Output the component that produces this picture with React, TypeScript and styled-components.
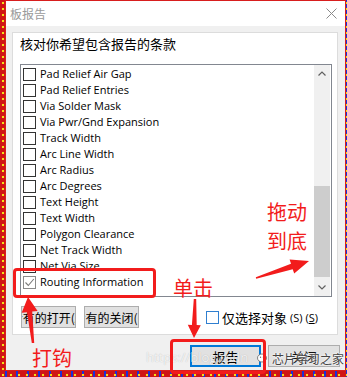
import React from "react";
import styled, { createGlobalStyle } from "styled-components";

const CJK = `"Noto Sans CJK SC", "Noto Sans", sans-serif`;
const UI = `"Open Sans", "Noto Sans CJK SC", sans-serif`;
const RED = "#f21c1c";

const GlobalStyle = createGlobalStyle`
  html, body { margin: 0; padding: 0; }
  body { width: 347px; height: 377px; overflow: hidden; font-family: ${UI}; }
  * { box-sizing: border-box; }
`;

const Screen = styled.div`
  position: relative;
  width: 347px;
  height: 377px;
  padding: 0 1px 6px 5px;
  background:
    radial-gradient(circle at 3px 3px, #f2e21a 1px, transparent 1.6px) 0 0 / 8px 6px,
    repeating-linear-gradient(90deg, transparent 0 5px, #1c2fd6 5px 7px, transparent 7px 11px),
    #cf1515;
`;

const Window = styled.div`
  height: 100%;
  display: flex;
  flex-direction: column;
  border: 1px solid #d81e1e;
  background: #f0f0f0;
`;

const TitleBar = styled.div`
  height: 25px;
  flex: none;
  background: #fff;
  display: flex;
  align-items: center;
  justify-content: space-between;
  padding: 0 8px 0 4px;
`;

const Title = styled.span`
  font: 12px ${CJK};
  color: #9a9a9a;
`;

const Body = styled.div`
  flex: 1;
  display: flex;
  flex-direction: column;
  padding: 6px 5px 3px 6px;
`;

const Panel = styled.div`
  margin-right: 2px;
  background: #fff;
  border: 1px solid #dcdcdc;
  padding: 2px 5px 6px 7px;
  display: flex;
  flex-direction: column;
`;

const Heading = styled.div`
  height: 18px;
  font: 13px/18px ${CJK};
  color: #000;
  margin-bottom: 11px;
`;

const ListBox = styled.div`
  height: 233px;
  border: 1px solid #828790;
  display: flex;
  background: #fff;
`;

const Items = styled.div`
  flex: 1;
  padding-top: 1px;
  overflow: hidden;
`;

const Row = styled.div`
  height: 16px;
  display: flex;
  align-items: center;
  gap: 4px;
  padding-left: 2px;
  font: 11px/16px ${UI};
  color: #000;
  white-space: nowrap;
`;

const Box = styled.span<{ $checked?: boolean }>`
  width: 13px;
  height: 13px;
  flex: none;
  display: grid;
  place-items: center;
  background: #fff;
  border: 1px solid ${(p) => (p.$checked ? "#8a8a8a" : "#333")};
`;

const Scrollbar = styled.div`
  width: 16px;
  margin-right: 1px;
  background: #f0f0f0;
  display: flex;
  flex-direction: column;
`;

const ScrollArrow = styled.div`
  height: 17px;
  display: grid;
  place-items: center;
`;

const Track = styled.div`
  flex: 1;
  padding-top: 104px;
`;

const Thumb = styled.div`
  height: 91px;
  background: #cdcdcd;
`;

const Controls = styled.div`
  margin-top: 9px;
  height: 22px;
  display: flex;
  align-items: center;
  gap: 8px;
  padding-left: 1px;
`;

const SmallButton = styled.button`
  width: 55px;
  height: 22px;
  padding: 0;
  background: #e1e1e1;
  border: 1px solid #adadad;
  font: 12px ${CJK};
  color: #000;
  overflow: hidden;
  white-space: nowrap;
  display: flex;
  align-items: center;
  justify-content: center;
`;

const CheckLabel = styled.label`
  margin-left: 59px;
  display: flex;
  align-items: center;
  gap: 2px;
  font: 13px ${CJK};
  color: #000;
  white-space: nowrap;
`;

const BlueBox = styled.span`
  width: 13px;
  height: 13px;
  border: 1px solid #2f7fd0;
  background: #fff;
  margin-right: 1px;
`;

const Hint = styled.span`
  font: 11px ${UI};
  margin-left: 1px;
`;

const Footer = styled.div`
  margin-top: 10px;
  display: flex;
  justify-content: flex-end;
  gap: 7px;
`;

const DialogButton = styled.button<{ $primary?: boolean; $w: number }>`
  width: ${(p) => p.$w}px;
  height: 22px;
  padding: 0;
  background: #e1e1e1;
  border: ${(p) => (p.$primary ? "2px solid #0078d7" : "1px solid #adadad")};
  font: 13px ${CJK};
  color: #000;
  display: flex;
  align-items: center;
  justify-content: center;
`;

/* ---------- overlays (annotations drawn over the screenshot) ---------- */

const Overlay = styled.div`
  position: absolute;
  inset: 0;
  pointer-events: none;
`;

const RedFrame = styled.div<{ $x: number; $y: number; $w: number; $h: number }>`
  position: absolute;
  left: ${(p) => p.$x}px;
  top: ${(p) => p.$y}px;
  width: ${(p) => p.$w}px;
  height: ${(p) => p.$h}px;
  border: 3px solid ${RED};
  border-radius: 4px;
`;

const Mark = styled.div<{ $x: number; $y: number }>`
  position: absolute;
  left: ${(p) => p.$x}px;
  top: ${(p) => p.$y}px;
  font: 20px/29px ${CJK};
  color: ${RED};
  white-space: nowrap;
`;

const Watermark = styled.div`
  position: absolute;
  left: 146px;
  top: 348px;
  font: 13px ${UI};
  color: rgba(255, 255, 255, 0.8);
  text-shadow: 0 0 1px rgba(0, 0, 0, 0.25);
  white-space: nowrap;
`;

const Brand = styled.div`
  position: absolute;
  left: 257px;
  top: 350px;
  display: flex;
  align-items: center;
  gap: 3px;
  font: 12px ${CJK};
  color: #444;
  text-shadow: 0 0 2px #fff, 0 0 2px #fff;
  white-space: nowrap;
`;

const ArrowLayer = styled.svg`
  position: absolute;
  inset: 0;
`;

type P = [number, number];

function arrowPoints(tail: P, tip: P, headLen: number, headHalf: number, tailHalf: number, neckHalf: number) {
  const dx = tip[0] - tail[0];
  const dy = tip[1] - tail[1];
  const len = Math.hypot(dx, dy);
  const ux = dx / len;
  const uy = dy / len;
  const px = -uy;
  const py = ux;
  const bx = tip[0] - ux * headLen;
  const by = tip[1] - uy * headLen;
  const pts: P[] = [
    [tail[0] + px * tailHalf, tail[1] + py * tailHalf],
    [bx + px * neckHalf, by + py * neckHalf],
    [bx + px * headHalf, by + py * headHalf],
    tip,
    [bx - px * headHalf, by - py * headHalf],
    [bx - px * neckHalf, by - py * neckHalf],
    [tail[0] - px * tailHalf, tail[1] - py * tailHalf],
  ];
  return pts.map((q) => `${q[0].toFixed(1)},${q[1].toFixed(1)}`).join(" ");
}

const items = [
  "Pad Relief Air Gap",
  "Pad Relief Entries",
  "Via Solder Mask",
  "Via Pwr/Gnd Expansion",
  "Track Width",
  "Arc Line Width",
  "Arc Radius",
  "Arc Degrees",
  "Text Height",
  "Text Width",
  "Polygon Clearance",
  "Net Track Width",
  "Net Via Size",
];

export default function App() {
  return (
    <>
      <GlobalStyle />
      <Screen>
        <Window>
          <TitleBar>
            <Title>板报告</Title>
            <svg width="11" height="11" viewBox="0 0 11 11">
              <path d="M0.5 0.5 L10.5 10.5 M10.5 0.5 L0.5 10.5" stroke="#8a8a8a" strokeWidth="1" />
            </svg>
          </TitleBar>
          <Body>
            <Panel>
              <Heading>核对你希望包含报告的条款</Heading>
              <ListBox>
                <Items>
                  {items.map((t) => (
                    <Row key={t}>
                      <Box />
                      {t}
                    </Row>
                  ))}
                  <Row>
                    <Box $checked>
                      <svg width="11" height="11" viewBox="0 0 11 11">
                        <path d="M1.5 5.5 L4.3 8.5 L9.8 2" fill="none" stroke="#7a7a7a" strokeWidth="1.1" />
                      </svg>
                    </Box>
                    Routing Information
                  </Row>
                </Items>
                <Scrollbar>
                  <ScrollArrow>
                    <svg width="8" height="5" viewBox="0 0 8 5">
                      <path d="M0.5 4.5 L4 1 L7.5 4.5" fill="none" stroke="#606060" strokeWidth="1.2" />
                    </svg>
                  </ScrollArrow>
                  <Track>
                    <Thumb />
                  </Track>
                  <ScrollArrow>
                    <svg width="8" height="5" viewBox="0 0 8 5">
                      <path d="M0.5 0.5 L4 4 L7.5 0.5" fill="none" stroke="#606060" strokeWidth="1.2" />
                    </svg>
                  </ScrollArrow>
                </Scrollbar>
              </ListBox>
              <Controls>
                <SmallButton>所有的打开(A)</SmallButton>
                <SmallButton>所有的关闭(C)</SmallButton>
                <CheckLabel>
                  <BlueBox />
                  仅选择对象
                  <Hint>
                    (S) (<u>S</u>)
                  </Hint>
                </CheckLabel>
              </Controls>
            </Panel>
            <Footer>
              <DialogButton $primary $w={71}>报告</DialogButton>
              <DialogButton $w={72}>关闭</DialogButton>
            </Footer>
          </Body>
        </Window>

        <Overlay>
          <Watermark>https://blog.csdn</Watermark>
          <Brand>
            <svg width="12" height="11" viewBox="0 0 12 11">
              <ellipse cx="5" cy="5" rx="4.5" ry="4" fill="#fff" stroke="#666" strokeWidth="0.8" />
              <circle cx="3.5" cy="4.3" r="0.7" fill="#666" />
              <circle cx="6.5" cy="4.3" r="0.7" fill="#666" />
            </svg>
            芯片学习之家
          </Brand>
          <RedFrame $x={13} $y={268} $w={143} $h={30} />
          <RedFrame $x={170} $y={339} $w={96} $h={35} />
          <ArrowLayer width="347" height="377" viewBox="0 0 347 377">
            <polygon fill={RED} points={arrowPoints([33, 343], [28, 297], 15, 8, 1.2, 2.6)} />
            <polygon fill={RED} points={arrowPoints([195, 299], [194, 338], 13, 6.5, 1.2, 2.4)} />
            <polygon fill={RED} points={arrowPoints([256, 278], [309, 261], 18, 7.5, 0.8, 2.8)} />
          </ArrowLayer>
          <Mark $x={32} $y={343}>打钩</Mark>
          <Mark $x={173} $y={273}>单击</Mark>
          <Mark $x={267} $y={197}>
            拖动
            <br />
            到底
          </Mark>
        </Overlay>
      </Screen>
    </>
  );
}
